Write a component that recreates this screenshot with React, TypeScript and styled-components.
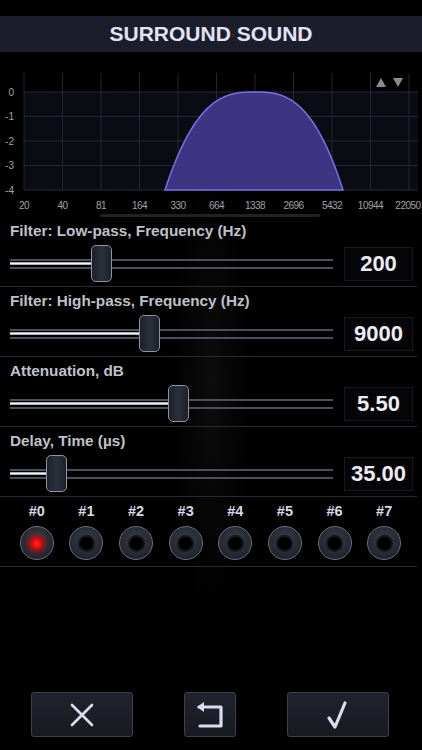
import React from "react";
import styled, { createGlobalStyle } from "styled-components";

type Control = {
  label: string;
  value: string;
  pos: number; // thumb left edge, px inside the track
};

const controls: Control[] = [
  { label: "Filter: Low-pass, Frequency (Hz)", value: "200", pos: 81 },
  { label: "Filter: High-pass, Frequency (Hz)", value: "9000", pos: 129 },
  { label: "Attenuation, dB", value: "5.50", pos: 158 },
  { label: "Delay, Time (µs)", value: "35.00", pos: 36 },
];

const freqs = ["20", "40", "81", "164", "330", "664", "1338", "2696", "5432", "10944", "22050"];
const dbs = ["0", "-1", "-2", "-3", "-4"];

const X0 = 24;
const XSTEP = 38.5;
const Y0 = 40;
const YSTEP = 24.5;

function curvePath() {
  const bottom = Y0 + 4 * YSTEP;
  const pts: string[] = [];
  for (let x = 165; x <= 343; x += 1) {
    const w = x < 255 ? 90 : 88;
    const t = Math.min(1, Math.abs(x - 255) / w);
    const y = Y0 + 4 * YSTEP * Math.pow(t, 2.8);
    pts.push(`${x},${y.toFixed(1)}`);
  }
  return `M165,${bottom} L${pts.join(" L")} L343,${bottom} Z`;
}

function Chart() {
  const bottom = Y0 + 4 * YSTEP;
  return (
    <ChartBox width={422} height={165} viewBox="0 0 422 165">
      <rect x={X0} y={Y0} width={394} height={4 * YSTEP} fill="#0b0c13" />
      {freqs.map((f, i) => (
        <line key={f} x1={X0 + i * XSTEP} x2={X0 + i * XSTEP} y1={21} y2={bottom} stroke="#232534" strokeWidth={1} />
      ))}
      {dbs.map((d, i) => (
        <line key={d} x1={X0} x2={418} y1={Y0 + i * YSTEP} y2={Y0 + i * YSTEP} stroke="#252738" strokeWidth={1} />
      ))}
      <path d={curvePath()} fill="#3d3581" stroke="#7b70e6" strokeWidth={1.5} />
      {dbs.map((d, i) => (
        <text key={d} x={14} y={Y0 + i * YSTEP + 3.5} textAnchor="end" fontSize={10} fill="#a0a0a8" fontFamily="Liberation Sans, Arial, sans-serif">
          {d}
        </text>
      ))}
      {freqs.map((f, i) => (
        <text key={f} x={X0 + i * XSTEP - (i === 10 ? 1 : 0)} y={157} textAnchor="middle" fontSize={10} fill="#a0a0a8" fontFamily="Liberation Sans, Arial, sans-serif" letterSpacing={-0.5}>
          {f}
        </text>
      ))}
      <polygon points="376,35 386,35 381,26" fill="#8a8a90" />
      <polygon points="393,26 403,26 398,35" fill="#8a8a90" />
      <rect x={100} y={162} width={220} height={3} rx={1.5} fill="#222226" />
    </ChartBox>
  );
}

function Slider({ pos }: { pos: number }) {
  return (
    <Track>
      <Rail />
      <Fill style={{ width: pos + 4 }} />
      <Thumb style={{ left: pos }} />
    </Track>
  );
}

function Jack({ active }: { active?: boolean }) {
  return (
    <JackOuter>
      <JackHole $active={active} />
    </JackOuter>
  );
}

export default function App() {
  return (
    <>
      <GlobalStyle />
      <Screen>
        <Header>SURROUND SOUND</Header>
        <Chart />
        {controls.map((c) => (
          <Row key={c.label}>
            <Label>{c.label}</Label>
            <ControlLine>
              <Slider pos={c.pos} />
              <ValueBox>{c.value}</ValueBox>
            </ControlLine>
          </Row>
        ))}
        <Channels>
          {Array.from({ length: 8 }, (_, i) => (
            <Channel key={i}>
              <ChannelName>#{i}</ChannelName>
              <Jack active={i === 0} />
            </Channel>
          ))}
        </Channels>
        <Spacer />
        <Buttons>
          <Button $w={102}>
            <svg width="24" height="24" viewBox="0 0 24 24">
              <path d="M2 2 L22 22 M22 2 L2 22" stroke="#dcdcf0" strokeWidth="2.6" strokeLinecap="round" />
            </svg>
          </Button>
          <Button $w={52}>
            <svg width="30" height="30" viewBox="0 0 30 30">
              <path d="M4 7 L26 7 L26 26 L5 26" fill="none" stroke="#dcdcf0" strokeWidth="3.2" strokeLinejoin="round" strokeLinecap="round" />
              <polygon points="2,7 9,2 9,12" fill="#dcdcf0" />
            </svg>
          </Button>
          <Button $w={102}>
            <svg width="26" height="30" viewBox="0 0 26 30">
              <path d="M4 18 L10 27 L20 3" fill="none" stroke="#dcdcf0" strokeWidth="3.2" strokeLinejoin="round" strokeLinecap="round" />
            </svg>
          </Button>
        </Buttons>
      </Screen>
    </>
  );
}

const GlobalStyle = createGlobalStyle`
  body {
    margin: 0;
    background: #000;
    font-family: "Liberation Sans", Arial, sans-serif;
  }
`;

const Screen = styled.div`
  width: 422px;
  height: 750px;
  display: flex;
  flex-direction: column;
  overflow: hidden;
  background: radial-gradient(ellipse 40px 230px at 50% 52%, rgba(55, 55, 60, 0.22), rgba(0, 0, 0, 0) 100%), #000;
`;

const Header = styled.div`
  margin-top: 16px;
  height: 36px;
  background: #1b1d2b;
  color: #e2e3f6;
  font-weight: bold;
  font-size: 21px;
  display: flex;
  align-items: center;
  justify-content: center;
`;

const ChartBox = styled.svg`
  display: block;
  flex-shrink: 0;
`;

const Row = styled.div`
  height: 70px;
  box-sizing: border-box;
  padding: 5px 9px 0 10px;
  border-bottom: 1px solid #272a36;
  margin-right: 5px;
`;

const Label = styled.div`
  color: #bfc0c8;
  font-weight: bold;
  font-size: 15.3px;
  line-height: 18px;
`;

const ControlLine = styled.div`
  margin-top: 4px;
  height: 40px;
  display: flex;
  align-items: center;
  justify-content: space-between;
  margin-right: -5px;
`;

const Track = styled.div`
  position: relative;
  width: 323px;
  height: 40px;
`;

const Rail = styled.div`
  position: absolute;
  left: 0;
  right: 0;
  top: 15px;
  height: 6px;
  border-top: 2px solid #4a4f5e;
  border-bottom: 2px solid #4a4f5e;
`;

const Fill = styled.div`
  position: absolute;
  left: 0;
  top: 18px;
  height: 3px;
  background: linear-gradient(#8d8f98, #f2f2f6 50%, #8d8f98);
`;

const Thumb = styled.div`
  position: absolute;
  top: 1px;
  width: 21px;
  height: 37px;
  box-sizing: border-box;
  border: 1px solid #8e94a4;
  border-radius: 5px;
  background: linear-gradient(90deg, #1d2029, #2c303b 50%, #1d2029);
`;

const ValueBox = styled.div`
  width: 69px;
  height: 34px;
  box-sizing: border-box;
  border: 1px solid #18191f;
  background: #050507;
  color: #ececf2;
  font-weight: bold;
  font-size: 22px;
  display: flex;
  align-items: center;
  justify-content: center;
`;

const Channels = styled.div`
  height: 70px;
  box-sizing: border-box;
  padding: 4px 8px 0 12px;
  margin-right: 5px;
  border-bottom: 1px solid #272a36;
  display: grid;
  grid-template-columns: repeat(8, 1fr);
`;

const Channel = styled.div`
  display: flex;
  flex-direction: column;
  align-items: center;
`;

const ChannelName = styled.div`
  color: #d9d9e2;
  font-weight: bold;
  font-size: 14.5px;
  line-height: 20px;
  margin-bottom: 5px;
`;

const JackOuter = styled.div`
  width: 34px;
  height: 34px;
  box-sizing: border-box;
  border-radius: 50%;
  border: 1px solid #6a6e7a;
  background: radial-gradient(circle at 50% 40%, #3a3e49, #22252e 70%);
  display: flex;
  align-items: center;
  justify-content: center;
`;

const JackHole = styled.div<{ $active?: boolean }>`
  width: 13px;
  height: 13px;
  border-radius: 50%;
  background: ${(p) => (p.$active ? "radial-gradient(circle, #ff2a2a, #e00000 60%, #900 100%)" : "#000")};
  box-shadow: ${(p) => (p.$active ? "0 0 5px 2px rgba(255, 0, 0, 0.55)" : "0 0 0 2px #14161c")};
`;

const Spacer = styled.div`
  flex: 1;
`;

const Buttons = styled.div`
  display: flex;
  justify-content: center;
  gap: 51px;
  padding-bottom: 13px;
  padding-right: 2px;
`;

const Button = styled.div<{ $w: number }>`
  width: ${(p) => p.$w}px;
  height: 45px;
  box-sizing: border-box;
  border: 1px solid #3e414c;
  border-radius: 3px;
  background: linear-gradient(#20232d, #181a22);
  display: flex;
  align-items: center;
  justify-content: center;
`;
